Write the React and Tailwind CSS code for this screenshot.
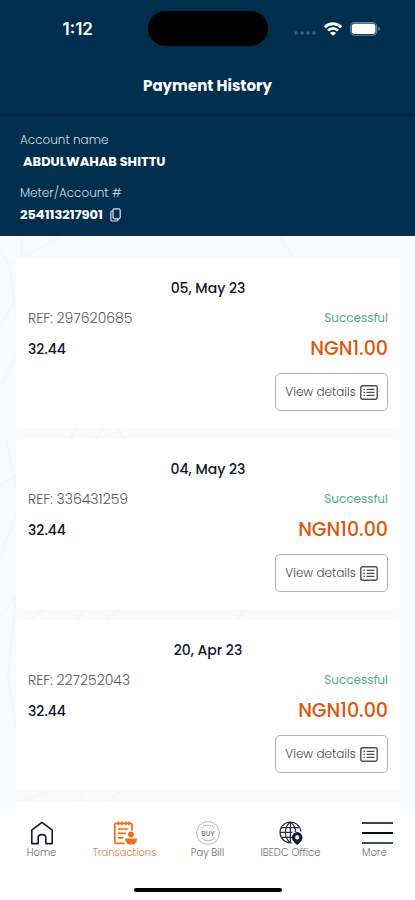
import React, { useState } from 'react'

const payments = [
  { date: '05, May 23', ref: '297620685', units: '32.44', amount: 'NGN1.00' },
  { date: '04, May 23', ref: '336431259', units: '32.44', amount: 'NGN10.00' },
  { date: '20, Apr 23', ref: '227252043', units: '32.44', amount: 'NGN10.00' },
]

function StatusBar() {
  return (
    <div className="grid grid-cols-[1fr_120px_1fr] items-center pt-[11px]">
      <div className="pl-2 text-center font-['Inter',sans-serif] text-[17px] leading-5 font-semibold">1:12</div>
      <div className="h-[35px] rounded-full bg-black" />
      <div className="flex items-center justify-center gap-2 pr-2">
        <svg width="22" height="12" viewBox="0 0 22 12" fill="#3f6683">
          <circle cx="2" cy="10" r="1.7" />
          <circle cx="8" cy="10" r="1.7" />
          <circle cx="14" cy="10" r="1.7" />
          <circle cx="20" cy="10" r="1.7" />
        </svg>
        <svg width="18" height="14" viewBox="0 0 18 14" fill="none" stroke="white" strokeWidth="2.8">
          <path d="M0.8 5.2 C5.2 0.6 12.8 0.6 17.2 5.2" />
          <path d="M4 8.6 C6.8 5.7 11.2 5.7 14 8.6" />
          <path d="M9 13.8 L6 10.9 C7.8 9.3 10.2 9.3 12 10.9 Z" fill="white" stroke="none" />
        </svg>
        <svg width="31" height="14" viewBox="0 0 31 14">
          <rect x="0.6" y="0.6" width="26" height="12.6" rx="4" fill="none" stroke="#6f8a9e" strokeWidth="1.1" />
          <rect x="1.8" y="1.8" width="23.6" height="10.2" rx="2.8" fill="white" />
          <path d="M28.2 4.8 C30.6 5.4 30.6 8.4 28.2 9 Z" fill="#6f8a9e" />
        </svg>
      </div>
    </div>
  )
}

function DetailsIcon() {
  return (
    <svg width="18" height="15" viewBox="0 0 18 15" fill="none" stroke="#4f4f4f" strokeWidth="1.4">
      <rect x="0.8" y="0.8" width="16.4" height="13.4" rx="1.6" />
      <path d="M3.5 4.4 H5 M3.5 7.4 H5 M3.5 10.4 H5 M6.6 4.4 H14.4 M6.6 7.4 H14.4 M6.6 10.4 H14.4" />
    </svg>
  )
}

// Faint street map behind the list
function MapBackground() {
  return (
    <svg className="absolute inset-0 h-full w-full" viewBox="0 0 415 577" preserveAspectRatio="xMidYMid slice" fill="none" stroke="#f5f7f9" strokeWidth="2">
      <path d="M0 90 L14 66 L10 30 L0 14 M10 30 L60 0 M14 66 L22 110 L0 150 M0 250 L20 236 M5 200 L20 270 L0 320 M0 380 L16 360 L8 440 L20 520" />
      <path d="M22 0 V20 M70 204 L78 188 M95 204 L110 184 L126 204 M30 384 L50 368 M78 384 L88 368 M106 384 L124 368 M236 384 L250 368 M20 566 L50 554 M80 566 L84 552 M108 566 L124 552" />
      <path d="M280 0 L292 20" />
    </svg>
  )
}

function PaymentCard({ payment }) {
  return (
    <article className="rounded bg-white px-3 pt-5 pb-[17px]">
      <h2 className="text-center text-sm leading-5 font-medium text-[#10182f]">{payment.date}</h2>
      <div className="mt-[10px] flex items-center justify-between leading-5">
        <span className="text-sm leading-5 font-light text-[#5a5a5a]">REF: {payment.ref}</span>
        <span className="text-[12px] text-[#4fae88]">Successful</span>
      </div>
      <div className="mt-[9px] flex items-center justify-between">
        <span className="text-sm leading-6 font-medium text-[#10182f]">{payment.units}</span>
        <span className="text-[19px] leading-6 font-medium text-[#d9590f]">{payment.amount}</span>
      </div>
      <div className="mt-3 flex justify-end">
        <button className="flex h-[38px] items-center gap-1 rounded-[5px] border border-[#b4b4b4] px-[9px] text-[12px] font-light text-[#4a4a4a]">
          View details
          <DetailsIcon />
        </button>
      </div>
    </article>
  )
}

function HomeIcon() {
  return (
    <svg width="24" height="24" viewBox="0 0 24 24" fill="none" stroke="#17163b" strokeWidth="1.6" strokeLinejoin="round">
      <path d="M1.8 9.2 L12 1.4 L22.2 9.2 V22.6 H15.8 V16.6 C15.8 14.6 14.6 13.6 12 13.6 C9.4 13.6 8.2 14.6 8.2 16.6 V22.6 H1.8 Z" />
    </svg>
  )
}

function TransactionsIcon() {
  return (
    <svg width="24" height="24" viewBox="0 0 24 24" fill="none" stroke="#ef6c1a" strokeWidth="1.7" strokeLinecap="round">
      <path d="M19 9 V3.6 Q19 2.4 17.8 2.4 H3 Q1.8 2.4 1.8 3.6 V21 Q1.8 22.4 3.2 22.4 H11" />
      <path d="M5.4 1 V3.6 M9 1 V3.6 M12.6 1 V3.6 M16 1 V3.6" />
      <path d="M5.6 8 H14.4 M5.6 12.4 H12.4 M5.6 16.8 H9.8" />
      <circle cx="18" cy="13.6" r="3" fill="#ef6c1a" stroke="none" />
      <path d="M12.2 17.6 H24 C24 21.6 21.8 23.6 18.1 23.6 C14.4 23.6 12.2 21.6 12.2 17.6 Z" fill="#ef6c1a" stroke="none" />
    </svg>
  )
}

function BuyIcon() {
  return (
    <svg width="24" height="24" viewBox="0 0 24 24" fill="none" stroke="#a6a6a6" strokeWidth="0.8">
      <circle cx="12" cy="12" r="11.4" />
      <path d="M5.6 7.4 C8.6 3 15.4 3 18.4 7.4 M5.6 16.6 C8.6 21 15.4 21 18.4 16.6" />
      <text x="12" y="14.6" textAnchor="middle" fontSize="7" fontWeight="500" fill="#777777" stroke="none">BUY</text>
    </svg>
  )
}

function OfficeIcon() {
  return (
    <svg width="24" height="24" viewBox="0 0 24 24" fill="none" stroke="#2b2b40" strokeWidth="1.2">
      <path d="M21.8 10.4 A10.4 10.4 0 1 0 12.6 21.8" />
      <path d="M11.4 1 V21.8 M11.4 1 C4.6 6.6 4.6 16.2 11.4 21.8 M11.4 1 C15 4 16.6 7.4 16.6 11" />
      <path d="M2.8 6.6 H20 M1 11.4 H13.4 M2.8 16.4 H13" />
      <path d="M18.2 24 C14.6 20.8 12.9 19 12.9 16.4 A5.3 5.3 0 0 1 23.5 16.4 C23.5 19 21.8 20.8 18.2 24 Z" fill="#17163b" stroke="none" />
      <circle cx="18.2" cy="16.4" r="2.1" fill="white" stroke="none" />
    </svg>
  )
}

function MoreIcon() {
  return (
    <svg width="31" height="24" viewBox="0 0 31 24" fill="none" strokeWidth="2">
      <path d="M0 2 H31" stroke="#3c3c5c" />
      <path d="M0 12 H31" stroke="#0c0c16" />
      <path d="M0 22 H31" stroke="#34526c" />
    </svg>
  )
}

const tabs = [
  { label: 'Home', Icon: HomeIcon },
  { label: 'Transactions', Icon: TransactionsIcon },
  { label: 'Pay Bill', Icon: BuyIcon },
  { label: 'IBEDC Office', Icon: OfficeIcon },
  { label: 'More', Icon: MoreIcon },
]

function App() {
  const [activeTab, setActiveTab] = useState('Transactions')

  return (
    <div className="flex h-screen flex-col overflow-hidden bg-white font-['Poppins','Inter',sans-serif]">
      {/* Header */}
      <header className="shrink-0 bg-[#002e4d] text-white">
        <StatusBar />
        <div className="pt-7 pb-4 shadow-[0_1px_3px_rgba(0,0,20,0.35)]">
          <h1 className="text-center text-[15px] leading-6 font-bold">Payment History</h1>
        </div>
        <dl className="border-b border-[#1c2357] px-5 pt-4 pb-[10px]">
          <dt className="text-[12px] leading-5 font-light text-[#d3dce4]">Account name</dt>
          <dd className="mt-[2px] pl-[3px] text-[13px] leading-5 font-bold">ABDULWAHAB SHITTU</dd>
          <dt className="mt-[11px] text-[12px] leading-5 font-light text-[#d3dce4]">Meter/Account #</dt>
          <dd className="mt-[2px] flex items-center gap-[7px] text-[13px] leading-5 font-bold">
            254113217901
            <button aria-label="Copy account number">
              <svg width="11" height="14" viewBox="0 0 11 14" fill="none" stroke="#dbe2e8" strokeWidth="1.2" strokeLinejoin="round">
                <rect x="3" y="0.8" width="7.2" height="10" rx="1.5" />
                <path d="M3 3 H2.2 Q0.8 3 0.8 4.4 V11.6 Q0.8 13 2.2 13 H6.6 Q8 13 8 11.6 V10.8" />
              </svg>
            </button>
          </dd>
        </dl>
      </header>

      {/* Payments */}
      <main className="relative min-h-0 flex-1 overflow-hidden bg-[#fafbfd]">
        <MapBackground />
        <div className="relative flex flex-col gap-[11px] pt-[22px] pr-[15px] pl-4">
          {payments.map((payment) => (
            <PaymentCard key={payment.ref} payment={payment} />
          ))}
          <div className="h-10 rounded bg-white" />
        </div>
      </main>

      {/* Bottom tabs */}
      <nav className="shrink-0 bg-white pt-2">
        <div className="grid grid-cols-5">
          {tabs.map(({ label, Icon }) => (
            <button
              key={label}
              onClick={() => setActiveTab(label)}
              className={`flex flex-col text-[10px] leading-4 font-light whitespace-nowrap ${label === 'More' ? 'items-start pl-[30px]' : 'items-center'} ${activeTab === label ? 'text-[#f0763a]' : 'text-[#6b6b6b]'}`}
            >
              <Icon />
              {label}
            </button>
          ))}
        </div>
        <div className="mx-auto mt-[27px] mb-2 h-1 w-[148px] rounded-full bg-black" />
      </nav>
    </div>
  )
}

export default App
